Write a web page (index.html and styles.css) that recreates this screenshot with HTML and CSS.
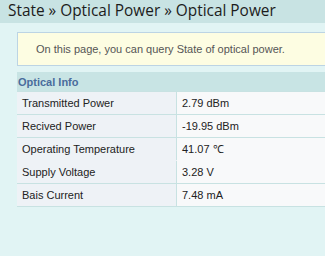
FILE: index.html
```html
<!DOCTYPE html>
<html>
<head>
<meta charset="utf-8">
<link rel="stylesheet" href="styles.css">
</head>
<body>
<div class="title">State » Optical Power » Optical Power</div>
<div class="content">
  <div class="notice">On this page, you can query State of optical power.</div>
  <div class="panel">
    <div class="panel-head">Optical Info</div>
    <div class="grid">
      <div class="row"><div class="lab">Transmitted Power</div><div class="val">2.79 dBm</div></div>
      <div class="row"><div class="lab">Recived Power</div><div class="val">-19.95 dBm</div></div>
      <div class="row nob"><div class="lab">Operating Temperature</div><div class="val">41.07 ℃</div></div>
      <div class="row"><div class="lab">Supply Voltage</div><div class="val">3.28 V</div></div>
      <div class="row"><div class="lab">Bais Current</div><div class="val">7.48 mA</div></div>
    </div>
  </div>
</div>
</body>
</html>
```
FILE: styles.css
```css
html, body {
  margin: 0;
  padding: 0;
  background: #e1f4f4;
  overflow: hidden;
  height: 256px;
}
body {
  font-family: "Liberation Sans", Arial, sans-serif;
}
.title {
  height: 23px;
  line-height: 21px;
  background: #c8e3e3;
  color: #1c1c1c;
  font-family: "Open Sans", sans-serif;
  font-size: 15.4px;
  padding-left: 8px;
  white-space: nowrap;
}
.content {
  padding: 9px 0 0 17px;
  width: 420px;
}
.notice {
  height: 32px;
  line-height: 33px;
  background: #fdfde2;
  border: 1px solid #bcd4e4;
  color: #555;
  font-size: 11px;
  padding-left: 18px;
}
.panel {
  margin-top: 6px;
}
.panel-head {
  height: 18px;
  line-height: 20px;
  background: #c8e4e4;
  color: #4a6c9c;
  font-weight: bold;
  font-size: 11px;
  padding-left: 1px;
  border-bottom: 1px solid #c8e4e4;
}
.grid {
  display: flex;
  flex-direction: column;
  border-bottom: 1px solid #c8e2e2;
}
.row {
  display: flex;
  height: 22px;
  border-top: 1px solid #c8e2e2;
  font-size: 11px;
  color: #222;
  line-height: 23px;
}
.row.nob + .row {
  border-top-color: #eef2f6;
}
.row.nob + .row .val {
  box-shadow: 0 -1px 0 #f8f9fa;
}
.lab {
  width: 154px;
  padding-left: 5px;
  background: #eef2f6;
  border-right: 1px solid #c8e2e2;
}
.val {
  flex: 1;
  padding-left: 5px;
  background: #f8f9fa;
}
```
